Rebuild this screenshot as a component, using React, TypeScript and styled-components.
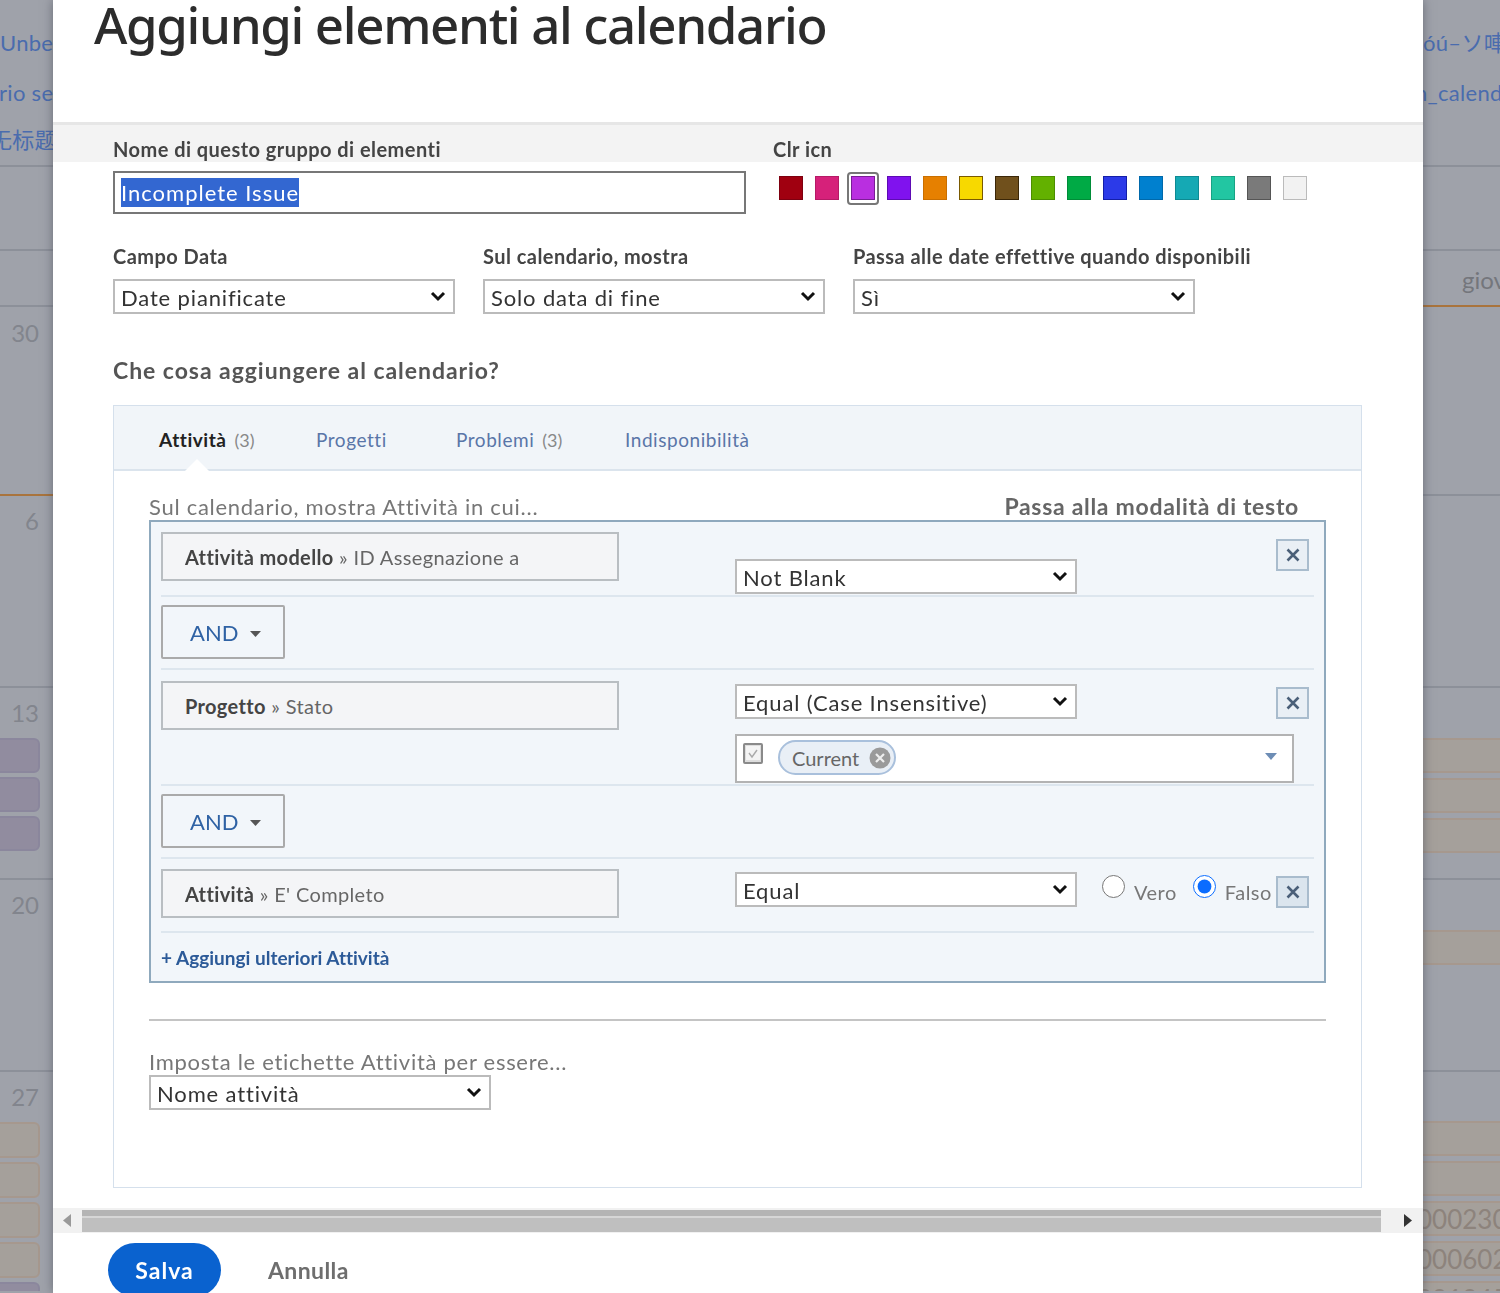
import React from "react";
import styled, { createGlobalStyle } from "styled-components";

const Global = createGlobalStyle`
  html, body { margin: 0; padding: 0; background: #9fa2aa; }
  * { box-sizing: border-box; font-variant-ligatures: none; }
`;

const FONT = `"Lato", "Noto Sans CJK JP", sans-serif`;

const Page = styled.div`
  width: 1500px;
  height: 1293px;
  overflow: hidden;
  display: grid;
  grid-template-columns: 53px 1370px 77px;
  font-family: ${FONT};
  filter: blur(0.45px);
`;

const Side = styled.div`
  background: #9fa2aa;
  overflow: hidden;
  display: flex;
  flex-direction: column;
`;

const CalRow = styled.div<{ $h: number; $line?: string; $pad?: number }>`
  height: ${(p) => p.$h}px;
  flex: none;
  border-bottom: 2px solid ${(p) => p.$line ?? "#8c9099"};
  padding-top: ${(p) => p.$pad ?? 0}px;
  display: flex;
  flex-direction: column;
  overflow: hidden;
`;

const CalLink = styled.div<{ $shift?: number; $lh?: number }>`
  font-size: 22px;
  line-height: ${(p) => p.$lh ?? 50}px;
  letter-spacing: 0.3px;
  color: #4a6cae;
  white-space: nowrap;
  flex: none;
  margin-left: ${(p) => p.$shift ?? 0}px;
`;

const DayNum = styled.div`
  font-size: 24px;
  line-height: 28px;
  color: #82858d;
  text-align: right;
  padding-right: 14px;
  height: 39px;
  flex: none;
`;

const DayName = styled.div`
  font-size: 24px;
  line-height: 30px;
  color: #74767c;
  padding: 14px 0 0 39px;
  white-space: nowrap;
`;

const Chip = styled.div<{ $tone: "purple" | "brown"; $right?: boolean; $h?: number }>`
  height: ${(p) => p.$h ?? 35}px;
  flex: none;
  margin: ${(p) => (p.$right ? "0 -8px 5px -8px" : "0 13px 4px -8px")};
  border-radius: 6px;
  border: 2px solid ${(p) => (p.$tone === "purple" ? "#8b879d" : "#a6988e")};
  background: ${(p) => (p.$tone === "purple" ? "#918c9f" : "#a5a09b")};
  font-size: 26px;
  line-height: 33px;
  color: #8d837c;
  white-space: nowrap;
  overflow: hidden;
`;

const Modal = styled.div`
  background: #fff;
  position: relative;
  box-shadow: 0 0 10px rgba(60, 64, 75, 0.55);
  display: flex;
  flex-direction: column;
  height: 1293px;
  overflow: hidden;
`;

const Header = styled.div`
  height: 125px;
  flex: none;
  padding-left: 41px;
  border-bottom: 3px solid #e6e6e6;
`;

const Title = styled.h1`
  margin: 0;
  font-family: "Noto Sans", sans-serif;
  font-size: 51px;
  line-height: 48px;
  font-weight: 500;
  color: #2c2c2c;
  white-space: nowrap;
  letter-spacing: -1.35px;
`;

const Band = styled.div`
  height: 37px;
  flex: none;
  background: #f3f3f3;
  padding: 10px 0 0 60px;
  display: grid;
  grid-template-columns: 660px 1fr;
  align-items: center;
`;

const Label = styled.div`
  font-size: 20px;
  line-height: 24px;
  letter-spacing: 0.45px;
  font-weight: 700;
  color: #444;
  white-space: nowrap;
`;

const TopRow = styled.div`
  display: flex;
  padding: 9px 0 0 60px;
  height: 82px;
  flex: none;
`;

const NameInput = styled.div`
  width: 633px;
  height: 43px;
  border: 2px solid #777;
  background: #fff;
  padding: 5px 0 0 6px;
  font-size: 22px;
  line-height: 29px;
  letter-spacing: 1px;
  color: #fff;
`;

const Selected = styled.span`
  background: #3367d1;
  display: inline-block;
`;

const Swatches = styled.div`
  display: flex;
  margin-left: 33px;
  padding-top: 5px;
  gap: 12px;
`;

const Swatch = styled.div<{ $c: string; $b: string; $on?: boolean }>`
  width: 24px;
  height: 24px;
  background: ${(p) => p.$c};
  border: 1px solid ${(p) => p.$b};
  position: relative;
  ${(p) =>
    p.$on
      ? `&::after { content: ""; position: absolute; inset: -5px -5px -6px -5px; border: 2px solid #777; border-radius: 4px; }`
      : ""}
`;

const FieldsRow = styled.div`
  display: flex;
  gap: 28px;
  padding-left: 60px;
  flex: none;
`;

const Field = styled.div`
  width: 342px;
  display: flex;
  flex-direction: column;
  gap: 11px;
`;

const SelectShell = styled.div<{ $top?: number }>`
  position: relative;
  width: 342px;
  height: 35px;
  flex: none;
  margin-top: ${(p) => p.$top ?? 0}px;
`;

const Select = styled.select`
  appearance: none;
  width: 100%;
  height: 100%;
  display: block;
  font-family: ${FONT};
  font-size: 22px;
  letter-spacing: 0.85px;
  color: #333;
  background: #fff;
  border: 2px solid #bbb;
  border-radius: 0;
  padding: 2px 6px 0;
  margin: 0;
`;

const Chevron = styled.svg`
  position: absolute;
  right: 9px;
  top: 12px;
  width: 16px;
  height: 11px;
  pointer-events: none;
`;

const Question = styled.h2`
  margin: 41px 0 0 60px;
  font-size: 23px;
  line-height: 30px;
  letter-spacing: 0.95px;
  font-weight: 700;
  color: #555;
  flex: none;
`;

const Panel = styled.div`
  margin: 20px 61px 0 60px;
  height: 783px;
  flex: none;
  border: 1px solid #d5e0ec;
`;

const TabBar = styled.div`
  height: 65px;
  background: #f1f5f9;
  border-bottom: 2px solid #dbe4ed;
  display: flex;
  align-items: center;
  padding: 4px 0 0 45px;
  position: relative;
`;

const Tab = styled.div<{ $active?: boolean; $w: number }>`
  width: ${(p) => p.$w}px;
  font-size: 19px;
  letter-spacing: 0.55px;
  font-weight: ${(p) => (p.$active ? 700 : 400)};
  color: ${(p) => (p.$active ? "#222" : "#5a75a8")};
  white-space: nowrap;
`;

const TabCount = styled.span`
  font-weight: 400;
  color: #888;
  margin-left: 8px;
  font-size: 18px;
  letter-spacing: 0;
`;

const Notch = styled.div`
  position: absolute;
  left: 71px;
  bottom: -2px;
  width: 24px;
  height: 12px;
  background: #fff;
  clip-path: polygon(50% 0, 100% 100%, 0 100%);
`;

const PanelBody = styled.div`
  padding: 21px 35px 0 35px;
`;

const BoxHead = styled.div`
  display: flex;
  justify-content: space-between;
  height: 28px;
  padding-right: 27px;
`;

const Hint = styled.div`
  font-size: 22px;
  line-height: 30px;
  letter-spacing: 0.72px;
  color: #777;
  white-space: nowrap;
`;

const TextMode = styled.div`
  font-size: 23px;
  line-height: 28px;
  letter-spacing: 0.7px;
  font-weight: 700;
  color: #666;
`;

const FilterBox = styled.div`
  height: 463px;
  border: 2px solid #8fa9bd;
  background: #f2f6fa;
  padding: 10px 10px 0;
`;

const Rule = styled.div<{ $pt: number; $pb: number }>`
  padding: ${(p) => p.$pt}px 0 ${(p) => p.$pb}px;
  border-bottom: 2px solid #dde6ee;
  display: grid;
  grid-template-columns: 458px 1fr;
  column-gap: 116px;
`;

const FieldBox = styled.div`
  height: 49px;
  background: #f4f5f7;
  border: 2px solid #b9bec2;
  padding-left: 22px;
  display: flex;
  align-items: center;
  font-size: 20px;
  letter-spacing: 0.35px;
  color: #666;
  white-space: pre;
`;

const FieldStrong = styled.b`
  color: #444;
  font-weight: 700;
`;

const RuleRight = styled.div`
  min-width: 0;
`;

const RuleLine = styled.div`
  display: flex;
  align-items: flex-start;
`;

const Remove = styled.button<{ $top: number; $on?: boolean }>`
  margin: ${(p) => p.$top}px 5px 0 auto;
  width: 33px;
  height: 32px;
  flex: none;
  padding: 0;
  border: 2px solid #a9bccd;
  background: ${(p) => (p.$on ? "#dbe5ee" : "#e9eff5")};
  display: flex;
  align-items: center;
  justify-content: center;
  color: #4a5f78;
`;

const Multi = styled.div`
  margin-top: 15px;
  width: 559px;
  height: 49px;
  border: 2px solid #b3b3b3;
  background: #fff;
  display: flex;
  align-items: flex-start;
  padding: 7px 15px 0 6px;
`;

const Check = styled.svg`
  width: 20px;
  height: 21px;
  flex: none;
`;

const Pill = styled.div`
  margin: -3px 0 0 15px;
  height: 35px;
  width: 118px;
  border: 2px solid #a9c0dc;
  border-radius: 18px;
  background: #e9eff6;
  display: flex;
  align-items: center;
  justify-content: space-between;
  padding: 0 3px 0 12px;
  font-size: 20px;
  color: #666;
`;

const PillX = styled.svg`
  width: 22px;
  height: 22px;
`;

const Caret = styled.svg`
  margin: 10px 0 0 auto;
  width: 12px;
  height: 7px;
`;

const Radio = styled.input<{ $ml: number }>`
  width: 23px;
  height: 23px;
  flex: none;
  margin: 6px 0 0 ${(p) => p.$ml}px;
  accent-color: #0a6cff;
`;

const RadioText = styled.span<{ $ml: number }>`
  margin: 11px 0 0 ${(p) => p.$ml}px;
  font-size: 20px;
  line-height: 24px;
  letter-spacing: 0.5px;
  color: #777;
`;

const AndRow = styled.div`
  padding: 8px 0 9px;
  border-bottom: 2px solid #dde6ee;
`;

const AndBtn = styled.button`
  width: 124px;
  height: 54px;
  border: 2px solid #aaa;
  border-radius: 2px;
  background: #f2f6fa;
  padding: 0 0 0 27px;
  display: flex;
  align-items: center;
  gap: 12px;
  font-family: ${FONT};
  font-size: 22px;
  color: #2f62a4;
`;

const AndCaret = styled.svg`
  width: 11px;
  height: 6px;
  margin-top: 3px;
`;

const AddLink = styled.div`
  height: 48px;
  display: flex;
  align-items: center;
  font-size: 19px;
  font-weight: 700;
  color: #2c5a98;
`;

const Divider = styled.div`
  height: 2px;
  margin-top: 36px;
  background: #c4c4c4;
`;

const LabelHint = styled(Hint)`
  margin-top: 26px;
  height: 28px;
`;

const ScrollBar = styled.div`
  margin-top: 20px;
  height: 25px;
  flex: none;
  background: #f1f1f1;
  display: flex;
  align-items: center;
`;

const ScrollArrow = styled.svg<{ $ml: number }>`
  width: 9px;
  height: 13px;
  flex: none;
  margin-left: ${(p) => p.$ml}px;
`;

const ScrollThumb = styled.div`
  width: 1299px;
  height: 22px;
  margin-left: 10px;
  background: #bfbfbf;
  border-top: 6px solid #b4b4b4;
  box-shadow: inset 0 2px 0 #d6d6d6;
`;

const Footer = styled.div`
  padding: 10px 0 0 55px;
  display: flex;
  align-items: center;
  gap: 47px;
`;

const SaveBtn = styled.button`
  width: 113px;
  height: 54px;
  border: 0;
  border-radius: 27px;
  background: #0a62cf;
  color: #fff;
  font-family: ${FONT};
  font-size: 23px;
  letter-spacing: 1px;
  font-weight: 700;
`;

const Cancel = styled.div`
  font-size: 23px;
  letter-spacing: 0.4px;
  font-weight: 700;
  color: #6e6e6e;
`;

const SWATCHES: [string, string][] = [
  ["#a00010", "#7e0010"], ["#d6217a", "#b51a66"], ["#b92fe0", "#7a1d96"], ["#8012ee", "#5d0bb3"],
  ["#e68000", "#c96f00"], ["#f7d900", "#7a5a00"], ["#70501c", "#3b2708"], ["#63b100", "#4c8e00"],
  ["#00aa45", "#008c38"], ["#2c3ae8", "#141fa8"], ["#0080cf", "#0069ab"], ["#15a9b4", "#0e8a93"],
  ["#22c6a2", "#17a384"], ["#7a7a7a", "#555"], ["#f2f2f2", "#bbb"],
];

const XIcon = () => (
  <svg width="16" height="16" viewBox="0 0 16 16">
    <path d="M2.5 2.5l11 11M13.5 2.5l-11 11" stroke="currentColor" strokeWidth="2.6" fill="none" />
  </svg>
);

const Opt = ({ v, $top }: { v: string; $top?: number }) => (
  <SelectShell $top={$top}>
    <Select defaultValue={v}>
      <option>{v}</option>
    </Select>
    <Chevron viewBox="0 0 16 11">
      <path d="M2 2l6 6 6-6" stroke="#111" strokeWidth="3" fill="none" />
    </Chevron>
  </SelectShell>
);

const AndButton = () => (
  <AndRow>
    <AndBtn>
      AND
      <AndCaret viewBox="0 0 11 6">
        <path d="M0 0h11L5.5 6z" fill="#555" />
      </AndCaret>
    </AndBtn>
  </AndRow>
);

const App = () => (
  <>
    <Global />
    <Page>
      <Side>
        <CalRow $h={167} $pad={18}>
          <CalLink>Unbe</CalLink>
          <CalLink $shift={-1}>rio se</CalLink>
          <CalLink $shift={-10} $lh={43}>无标题</CalLink>
        </CalRow>
        <CalRow $h={84} />
        <CalRow $h={56} />
        <CalRow $h={189} $pad={12} $line="#a9743d">
          <DayNum>30</DayNum>
        </CalRow>
        <CalRow $h={192} $pad={11}>
          <DayNum>6</DayNum>
        </CalRow>
        <CalRow $h={192} $pad={11}>
          <DayNum>13</DayNum>
          <Chip $tone="purple" />
          <Chip $tone="purple" />
          <Chip $tone="purple" />
        </CalRow>
        <CalRow $h={192} $pad={11}>
          <DayNum>20</DayNum>
        </CalRow>
        <CalRow $h={221} $pad={11} $line="transparent">
          <DayNum>27</DayNum>
          <Chip $tone="brown" $h={36} />
          <Chip $tone="brown" $h={36} />
          <Chip $tone="brown" $h={36} />
          <Chip $tone="brown" $h={36} />
          <Chip $tone="purple" $h={36} />
        </CalRow>
      </Side>

      <Modal>
        <Header>
          <Title>Aggiungi elementi al calendario</Title>
        </Header>
        <Band>
          <Label>Nome di questo gruppo di elementi</Label>
          <Label>Clr icn</Label>
        </Band>
        <TopRow>
          <NameInput>
            <Selected>Incomplete Issue</Selected>
          </NameInput>
          <Swatches>
            {SWATCHES.map(([c, b], i) => (
              <Swatch key={c} $c={c} $b={b} $on={i === 2} />
            ))}
          </Swatches>
        </TopRow>
        <FieldsRow>
          <Field>
            <Label>Campo Data</Label>
            <Opt v="Date pianificate" />
          </Field>
          <Field>
            <Label>Sul calendario, mostra</Label>
            <Opt v="Solo data di fine" />
          </Field>
          <Field>
            <Label>Passa alle date effettive quando disponibili</Label>
            <Opt v="Sì" />
          </Field>
        </FieldsRow>
        <Question>Che cosa aggiungere al calendario?</Question>
        <Panel>
          <TabBar>
            <Tab $active $w={157}>
              Attività<TabCount>(3)</TabCount>
            </Tab>
            <Tab $w={140}>Progetti</Tab>
            <Tab $w={169}>
              Problemi<TabCount>(3)</TabCount>
            </Tab>
            <Tab $w={130}>Indisponibilità</Tab>
            <Notch />
          </TabBar>
          <PanelBody>
            <BoxHead>
              <Hint>Sul calendario, mostra Attività in cui...</Hint>
              <TextMode>Passa alla modalità di testo</TextMode>
            </BoxHead>
            <FilterBox>
              <Rule $pt={0} $pb={1}>
                <FieldBox>
                  <FieldStrong>Attività modello</FieldStrong> » ID Assegnazione a
                </FieldBox>
                <RuleRight>
                  <RuleLine>
                    <Opt v="Not Blank" $top={27} />
                    <Remove $top={7}>
                      <XIcon />
                    </Remove>
                  </RuleLine>
                </RuleRight>
              </Rule>
              <AndButton />
              <Rule $pt={11} $pb={1}>
                <FieldBox>
                  <FieldStrong>Progetto</FieldStrong> » Stato
                </FieldBox>
                <RuleRight>
                  <RuleLine>
                    <Opt v="Equal (Case Insensitive)" $top={3} />
                    <Remove $top={6}>
                      <XIcon />
                    </Remove>
                  </RuleLine>
                  <Multi>
                    <Check viewBox="0 0 20 21">
                      <rect x="1" y="1" width="18" height="19" fill="#ddd" stroke="#8a8a8a" strokeWidth="2" rx="1" />
                      <rect x="3" y="3" width="14" height="14" fill="#f4f4f4" />
                      <path d="M6 10l3 4 5-7" stroke="#aaa" strokeWidth="1.4" fill="none" />
                    </Check>
                    <Pill>
                      Current
                      <PillX viewBox="0 0 22 22">
                        <circle cx="11" cy="11" r="10.5" fill="#9a9a9a" />
                        <path d="M7 7l8 8M15 7l-8 8" stroke="#eee" strokeWidth="2.2" />
                      </PillX>
                    </Pill>
                    <Caret viewBox="0 0 12 7">
                      <path d="M0 0h12L6 7z" fill="#6d8db5" />
                    </Caret>
                  </Multi>
                </RuleRight>
              </Rule>
              <AndButton />
              <Rule $pt={10} $pb={13}>
                <FieldBox>
                  <FieldStrong>Attività</FieldStrong> » E' Completo
                </FieldBox>
                <RuleRight>
                  <RuleLine>
                    <Opt v="Equal" $top={3} />
                    <Radio $ml={25} type="radio" name="bool" />
                    <RadioText $ml={9}>Vero</RadioText>
                    <Radio $ml={16} type="radio" name="bool" defaultChecked />
                    <RadioText $ml={9}>Falso</RadioText>
                    <Remove $top={7} $on>
                      <XIcon />
                    </Remove>
                  </RuleLine>
                </RuleRight>
              </Rule>
              <AddLink>+ Aggiungi ulteriori Attività</AddLink>
            </FilterBox>
            <Divider />
            <LabelHint>Imposta le etichette Attività per essere...</LabelHint>
            <Opt v="Nome attività" />
          </PanelBody>
        </Panel>
        <ScrollBar>
          <ScrollArrow $ml={10} viewBox="0 0 9 13">
            <path d="M8 0v13L0 6.5z" fill="#999" />
          </ScrollArrow>
          <ScrollThumb />
          <ScrollArrow $ml={23} viewBox="0 0 9 13">
            <path d="M0 0v13l8-6.5z" fill="#333" />
          </ScrollArrow>
        </ScrollBar>
        <Footer>
          <SaveBtn>Salva</SaveBtn>
          <Cancel>Annulla</Cancel>
        </Footer>
      </Modal>

      <Side>
        <CalRow $h={167} $pad={18}>
          <CalLink>óú–ソ唓</CalLink>
          <CalLink $shift={-8}>n_calendar</CalLink>
        </CalRow>
        <CalRow $h={84} />
        <CalRow $h={56} $line="#a9743d">
          <DayName>giovedì</DayName>
        </CalRow>
        <CalRow $h={189} />
        <CalRow $h={192} />
        <CalRow $h={192} $pad={50}>
          <Chip $tone="brown" $right />
          <Chip $tone="brown" $right />
          <Chip $tone="brown" $right />
        </CalRow>
        <CalRow $h={192} $pad={50}>
          <Chip $tone="brown" $right />
        </CalRow>
        <CalRow $h={221} $pad={49} $line="transparent">
          <Chip $tone="brown" $right />
          <Chip $tone="brown" $right />
          <Chip $tone="brown" $right>000230</Chip>
          <Chip $tone="brown" $right>000602</Chip>
          <Chip $tone="brown" $right>001045</Chip>
        </CalRow>
      </Side>
    </Page>
  </>
);

export default App;
